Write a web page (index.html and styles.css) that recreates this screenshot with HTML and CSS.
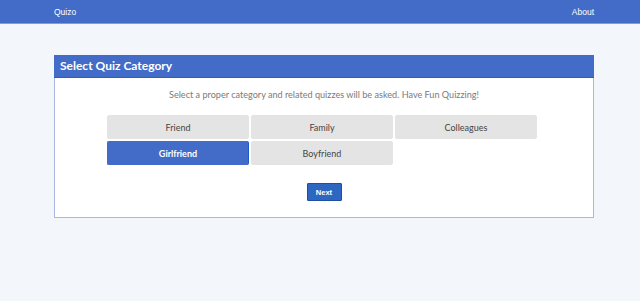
FILE: index.html
```html
<!DOCTYPE html>
<html lang="en">
<head>
    <meta charset="UTF-8">
    <title>Quizo</title>
    <link rel="stylesheet" href="styles.css">
</head>
<body>
    <nav class="navbar">
        <div class="nav-inner">
            <a class="brand" href="#">Quizo</a>
            <a class="nav-link" href="#">About</a>
        </div>
    </nav>
    <div class="container">
        <div class="card">
            <div class="card-header">Select Quiz Category</div>
            <div class="card-body">
                <p class="lead">Select a proper category and related quizzes will be asked. Have Fun Quizzing!</p>
                <div class="category-grid">
                    <button class="category">Friend</button>
                    <button class="category">Family</button>
                    <button class="category">Colleagues</button>
                    <button class="category active">Girlfriend</button>
                    <button class="category">Boyfriend</button>
                </div>
                <div class="actions">
                    <button class="btn-next">Next</button>
                </div>
            </div>
        </div>
    </div>
</body>
</html>
```

FILE: styles.css
```css
html, body {
    margin: 0;
    padding: 0;
}
* {
    box-sizing: border-box;
}
body {
    background: #f3f7fb;
    font-family: Lato, "Open Sans", sans-serif;
    color: #555;
}
.navbar {
    background: #426cc7;
    height: 24px;
    border-bottom: 1px solid #7f9ddb;
}
.nav-inner {
    display: flex;
    justify-content: space-between;
    align-items: center;
    height: 23px;
    margin: 0 46px 0 54px;
}
.navbar a {
    color: #fff;
    text-decoration: none;
    font-family: "Liberation Sans", Arial, sans-serif;
    font-size: 8.5px;
}
.brand {
    font-size: 9px;
}
.container {
    width: 540px;
    margin: 31px 46px 0 54px;
}
.card {
    background: #fff;
    border: 1px solid #a9b7e6;
}
.card-header {
    background: #426cc7;
    color: #fff;
    height: 23px;
    margin: -1px -1px 0 -1px;
    border-bottom: 1px solid #2e5dc0;
    padding: 0 6px;
    font-size: 12px;
    font-weight: bold;
    line-height: 22px;
}
.card-body {
    padding: 10px 0 16px 0;
}
.lead {
    margin: 0;
    text-align: center;
    font-size: 9.1px;
    line-height: 14px;
    color: #7a7a7a;
}
.category-grid {
    display: grid;
    grid-template-columns: repeat(3, 142px);
    grid-auto-rows: 24px;
    gap: 2px;
    margin: 13px 0 0 52px;
}
.category {
    background: #e4e4e4;
    border: 1px solid #e4e4e4;
    border-radius: 2px;
    color: #454545;
    font-family: Lato, "Open Sans", sans-serif;
    font-size: 9px;
    padding: 0;
}
.category.active {
    background: #426cc7;
    border-color: #426cc7;
    border-right-color: #1f5bd0;
    color: #fff;
    font-weight: bold;
}
.actions {
    display: flex;
    justify-content: center;
    margin-top: 18px;
}
.btn-next {
    width: 35px;
    height: 18px;
    padding: 0;
    background: #2d67c2;
    border: 1px solid #1d4fa0;
    border-radius: 1px;
    color: #fff;
    font-family: "Liberation Sans", Arial, sans-serif;
    font-weight: bold;
    font-size: 7.5px;
}
```
